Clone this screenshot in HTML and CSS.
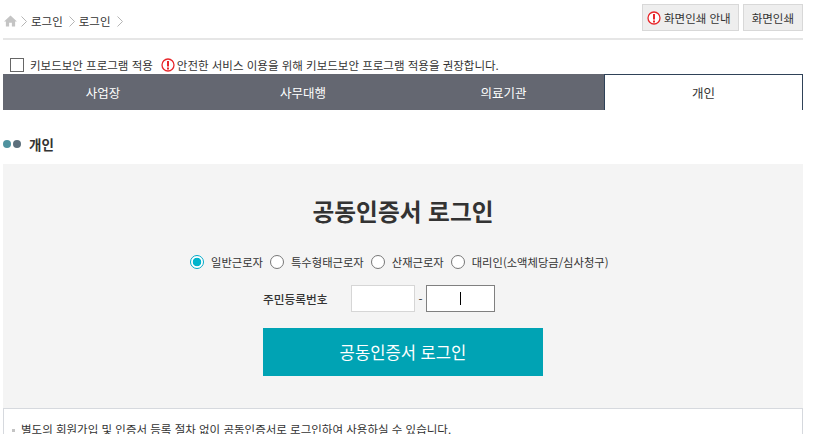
FILE: index.html
```html
<!DOCTYPE html>
<html lang="ko">
<head>
    <meta charset="UTF-8">
    <title>공동인증서 로그인</title>
    <link rel="stylesheet" href="styles.css">
</head>
<body>

<div class="container">
    <div class="top-bar">
        <div class="breadcrumb">
            <svg class="home-icon" width="13" height="12" viewBox="0 0 14 13"><path d="M7 0.5 L0 7 H2 V12.5 H5.5 V8.5 H8.5 V12.5 H12 V7 H14 Z" fill="#c4c4c4"/></svg>
            <svg class="crumb-arrow" width="6" height="11" viewBox="0 0 6 11"><path d="M0.5 0.5 L5.5 5.5 L0.5 10.5" fill="none" stroke="#b5b5b5"/></svg>
            <span>로그인</span>
            <svg class="crumb-arrow" width="6" height="11" viewBox="0 0 6 11"><path d="M0.5 0.5 L5.5 5.5 L0.5 10.5" fill="none" stroke="#b5b5b5"/></svg>
            <span>로그인</span>
            <svg class="crumb-arrow" width="6" height="11" viewBox="0 0 6 11"><path d="M0.5 0.5 L5.5 5.5 L0.5 10.5" fill="none" stroke="#b5b5b5"/></svg>
        </div>
        <div class="print-buttons">
            <button type="button" class="print-btn">
                <svg width="14" height="14" viewBox="0 0 14 14"><circle cx="7" cy="7" r="6" fill="#fff" stroke="#e8262a" stroke-width="1.3"/><rect x="6" y="3" width="2" height="5.5" fill="#e8262a"/><rect x="6" y="9.5" width="2" height="2" fill="#e8262a"/></svg>
                화면인쇄 안내
            </button>
            <button type="button" class="print-btn">화면인쇄</button>
        </div>
    </div>

    <div class="keyboard-row">
        <span class="checkbox"></span>
        <span class="keyboard-label">키보드보안 프로그램 적용</span>
        <svg width="14" height="14" viewBox="0 0 14 14"><circle cx="7" cy="7" r="6" fill="#fff" stroke="#e8262a" stroke-width="1.3"/><rect x="6" y="3" width="2" height="5.5" fill="#e8262a"/><rect x="6" y="9.5" width="2" height="2" fill="#e8262a"/></svg>
        <span>안전한 서비스 이용을 위해 키보드보안 프로그램 적용을 권장합니다.</span>
    </div>

    <ul class="tabs">
        <li>사업장</li>
        <li>사무대행</li>
        <li>의료기관</li>
        <li class="active">개인</li>
    </ul>

    <h3 class="section-title">
        <span class="dot dot-teal"></span>
        <span class="dot dot-slate"></span>
        <span class="section-text">개인</span>
    </h3>

    <div class="login-box">
        <h2>공동인증서 로그인</h2>

        <div class="radio-row">
            <span class="radio checked"></span><span class="radio-label">일반근로자</span>
            <span class="radio"></span><span class="radio-label">특수형태근로자</span>
            <span class="radio"></span><span class="radio-label">산재근로자</span>
            <span class="radio"></span><span class="radio-label">대리인(소액체당금/심사청구)</span>
        </div>

        <div class="id-row">
            <span class="id-label">주민등록번호</span>
            <span class="id-input"></span>
            <span class="id-dash">-</span>
            <span class="id-input focused"><span class="caret"></span></span>
        </div>

        <button type="button" class="login-btn">공동인증서 로그인</button>

        <div class="notice">
            <span class="bullet"></span>별도의 회원가입 및 인증서 등록 절차 없이 공동인증서로 로그인하여 사용하실 수 있습니다.
        </div>
    </div>
</div>

</body>
</html>
```

FILE: styles.css
```css
:root {
    --tab-color: #646771;
    --tab-border: #2f4258;
    --box-bg: #f4f4f4;
    --text-color: #333333;
    --point-color: #00a3b4;
    --font-family: 'Noto Sans CJK KR', 'Noto Sans', sans-serif;
}

*, *::before, *::after {
    box-sizing: border-box;
    margin: 0;
    padding: 0;
}

html, body {
    height: 434px;
    overflow: hidden;
}

body {
    background: #fff;
    font-family: var(--font-family);
    color: var(--text-color);
    font-size: 11.5px;
}

.container {
    width: 800px;
    margin-left: 3px;
}

.top-bar {
    display: flex;
    justify-content: space-between;
    height: 40px;
    padding-top: 4px;
    border-bottom: 2px solid #e6e6e6;
}

.breadcrumb {
    display: flex;
    align-items: center;
    gap: 4px;
    height: 27px;
    padding-top: 7px;
}

.breadcrumb span {
    margin-right: 2px;
}

.home-icon {
    margin-left: 1px;
}

.print-buttons {
    display: flex;
    gap: 4px;
}

.print-btn {
    display: flex;
    align-items: center;
    gap: 3px;
    height: 27px;
    padding: 0 7px 0 4px;
    background: #eeeeee;
    border: 1px solid #d8d8d8;
    font-family: var(--font-family);
    font-size: 11.5px;
    color: var(--text-color);
}

.print-btn:last-child {
    padding: 0 8px;
}

.keyboard-row {
    display: flex;
    align-items: center;
    height: 34px;
    padding: 16px 0 0 7px;
}

.checkbox {
    width: 14px;
    height: 14px;
    border: 1px solid #666;
    background: #fff;
    margin-right: 6px;
}

.keyboard-label {
    margin-right: 8px;
}

.keyboard-row svg {
    margin-right: 2px;
}

.tabs {
    display: grid;
    grid-template-columns: 200px 200px 201px 199px;
    height: 36px;
    list-style: none;
}

.tabs li {
    display: flex;
    align-items: center;
    justify-content: center;
    background: var(--tab-color);
    color: #fff;
    font-size: 12.5px;
}

.tabs li.active {
    background: #fff;
    color: var(--text-color);
    border: 1px solid var(--tab-border);
    border-bottom: none;
}

.section-title {
    display: flex;
    align-items: center;
    height: 54px;
    padding-top: 14px;
    font-size: 13.5px;
    font-weight: 700;
}

.dot {
    width: 8px;
    height: 8px;
    border-radius: 50%;
    margin-right: 2px;
}

.dot-teal {
    background: #4f929f;
}

.dot-slate {
    background: #5c6f7c;
}

.section-text {
    margin-left: 6px;
}

.login-box {
    height: 270px;
    overflow: hidden;
    background: var(--box-bg);
    padding-top: 30px;
}

.login-box h2 {
    height: 34px;
    line-height: 34px;
    margin-bottom: 26px;
    text-align: center;
    font-size: 23.7px;
    font-weight: 700;
}

.radio-row {
    display: flex;
    align-items: center;
    height: 16px;
    padding-left: 187px;
    font-size: 11.3px;
}

.radio {
    width: 14px;
    height: 14px;
    margin-right: 7px;
    border: 1px solid #777;
    border-radius: 50%;
    background: #fff;
}

.radio.checked {
    border-color: #00a9c8;
    background: radial-gradient(circle, #00b4cc 0 4px, #fff 4.6px);
}

.radio-label {
    margin-right: 7px;
}

.id-row {
    display: flex;
    align-items: center;
    height: 27px;
    margin-top: 15px;
}

.id-label {
    width: 348px;
    padding-left: 260px;
    font-size: 11.7px;
    font-weight: 500;
}

.id-input {
    display: flex;
    align-items: center;
    justify-content: center;
    width: 64px;
    height: 27px;
    background: #fff;
    border: 1px solid #d6d6d6;
}

.id-input.focused {
    width: 69px;
    border-color: #808080;
}

.id-dash {
    width: 11px;
    text-align: center;
}

.caret {
    width: 1px;
    height: 13px;
    background: #000;
}

.login-btn {
    display: block;
    width: 280px;
    height: 48px;
    margin: 16px 0 0 260px;
    background: var(--point-color);
    border: none;
    color: #fff;
    font-family: var(--font-family);
    font-size: 16.6px;
}

.notice {
    height: 60px;
    margin-top: 32px;
    padding: 13px 0 0 8px;
    background: #fff;
    border: 1px solid #d6d9de;
    line-height: 14px;
}

.bullet {
    display: inline-block;
    width: 3px;
    height: 3px;
    margin-right: 6px;
    vertical-align: middle;
    background: #c4c4c4;
}
```
